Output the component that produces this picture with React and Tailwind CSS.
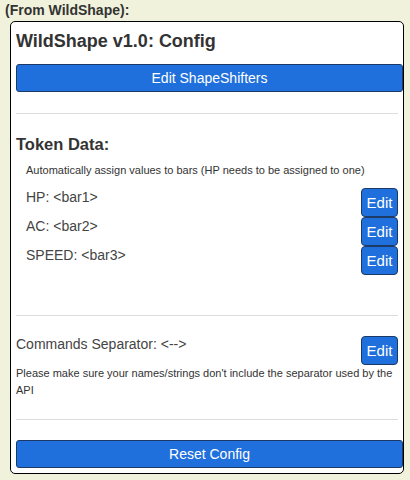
const rows = [
  { label: "HP", bar: "<bar1>" },
  { label: "AC", bar: "<bar2>" },
  { label: "SPEED", bar: "<bar3>" },
];

function EditButton() {
  return (
    <button className="h-[29px] w-[37px] rounded-[4px] border border-[#1d3a66] bg-[#1f6fdc] text-[15px] leading-none text-white">
      Edit
    </button>
  );
}

export default function App() {
  return (
    <div
      className="h-[480px] w-[410px] bg-[#f0f2dc] text-[#333]"
      style={{ fontFamily: '"Liberation Sans", Arial, sans-serif' }}
    >
      <div className="pl-[5px] pt-[3px] text-[14px] font-bold leading-[15px] text-[#333]">(From WildShape):</div>
      <div className="ml-[10px] mt-[3px] w-[394px] rounded-[5px] border border-black bg-white px-[5px] pb-[5px] pt-[8px]">
        <h1 className="text-[18px] font-bold leading-[22px] text-[#333]">WildShape v1.0: Config</h1>
        <button className="mr-[-5px] mt-[12px] block h-[28px] w-[387px] rounded-[3px] border border-[#1d3a66] bg-[#1f6fdc] text-[14px] text-white">
          Edit ShapeShifters
        </button>
        <div className="mt-[21px] border-t border-[#ddd]" />

        <h2 className="mt-[20px] text-[16.5px] font-bold leading-[20px] text-[#333]">Token Data:</h2>
        <p className="ml-[10px] mt-[9px] text-[11px] leading-[14px] text-[#333]">
          Automatically assign values to bars (HP needs to be assigned to one)
        </p>
        <div className="mt-[11px]">
          {rows.map((r) => (
            <div key={r.label} className="flex h-[29px] items-start justify-between">
              <span className="ml-[10px] pt-[1px] text-[14px] leading-[16px] text-[#444]">
                {r.label}: {r.bar}
              </span>
              <EditButton />
            </div>
          ))}
        </div>
        <div className="mt-[40px] border-t border-[#ddd]" />

        <div className="mt-[20px] flex h-[29px] items-start justify-between">
          <span className="text-[14px] leading-[16px] text-[#444]">Commands Separator: {"<-->"}</span>
          <EditButton />
        </div>
        <p className="text-[11px] leading-[17px] text-[#333]">
          Please make sure your names/strings don't include the separator used by the API
        </p>
        <div className="mt-[20px] border-t border-[#ddd]" />

        <button className="mr-[-5px] mt-[20px] block h-[28px] w-[387px] rounded-[3px] border border-[#1d3a66] bg-[#1f6fdc] text-[14px] text-white">
          Reset Config
        </button>
      </div>
    </div>
  );
}
